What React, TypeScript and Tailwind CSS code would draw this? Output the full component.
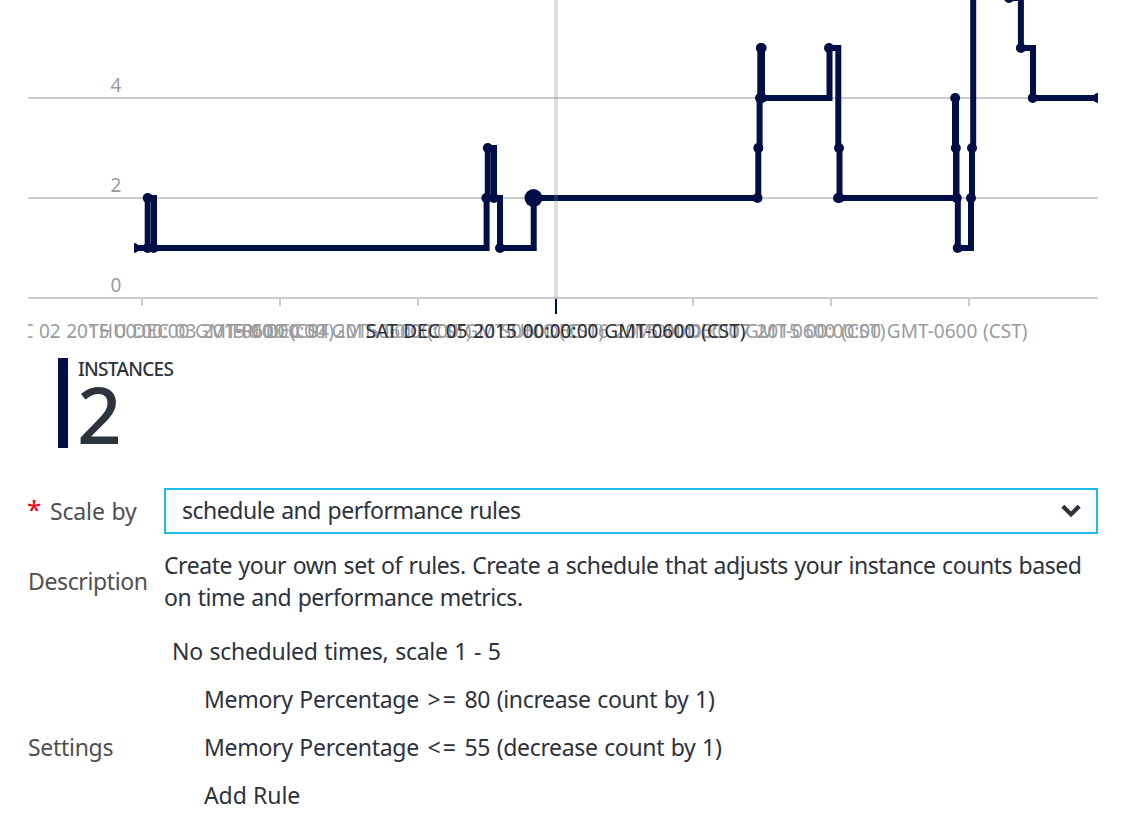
import React from "react";

const NAVY = "#000f46";

const ticks = [142, 280, 418, 693, 831, 969];

const axisLabels = [
  { x: 142, w: 384, text: "WED DEC 02 2015 00:00:00 GMT-0600 (CST)" },
  { x: 280, w: 383, text: "THU DEC 03 2015 00:00:00 GMT-0600 (CST)" },
  { x: 418, w: 372, text: "FRI DEC 04 2015 00:00:00 GMT-0600 (CST)" },
  { x: 693, w: 385, text: "SUN DEC 06 2015 00:00:00 GMT-0600 (CST)" },
  { x: 831, w: 393, text: "MON DEC 07 2015 00:00:00 GMT-0600 (CST)" },
];

const points: [number, number][] = [
  [134, 248], [147.7, 248], [147.7, 198], [153.7, 248],
  [487.8, 148], [486.3, 198], [493.8, 198], [500, 248],
  [760.8, 48], [761.6, 48], [760, 98], [762, 98], [758.3, 148], [757.5, 198],
  [829, 48], [839, 148], [838, 198], [839.5, 198],
  [955.2, 98], [955.8, 148], [956.7, 198], [957.7, 248],
  [971, 198], [972, 148],
  [1009, -2], [1020.9, 48], [1032.8, 98], [1098, 98],
];

const series =
  "M134 248H147.7V198H154V248H486.6V198H487.8V148H494V198H500V248H533.7V198H758.3V148H759.6V98H760.3V48H762V98H829.5V48H838.3V148H839.5V198H956V148H955V98H956V148H956.5V198H957.8V248H971V198H972V148H973.2V-10M1009 -2H1020.9V48H1033V98H1098";

function Chart() {
  return (
    <svg className="block h-[350px] w-[1070px] overflow-hidden" viewBox="28 0 1070 350" fontFamily="'Noto Sans', sans-serif">
      <defs>
        <clipPath id="plot">
          <rect x="134" y="0" width="964" height="300" />
        </clipPath>
      </defs>
      <g fill="#cccccc">
        <rect x="28" y="97" width="1070" height="2" />
        <rect x="28" y="197" width="1070" height="2" />
        <rect x="28" y="297" width="1070" height="2" />
        {ticks.map((x) => (
          <rect key={x} x={x - 1} y="299" width="2" height="7" />
        ))}
      </g>
      <g fill="#999c9f" fontSize="19">
        <text x="110.5" y="92">4</text>
        <text x="110.5" y="192">2</text>
        <text x="110.5" y="292">0</text>
      </g>
      <g clipPath="url(#plot)">
        <path d={series} fill="none" stroke={NAVY} strokeWidth="6" />
        {points.map(([x, y], i) => (
          <circle key={i} cx={x} cy={y} r="5" fill={NAVY} />
        ))}
        <circle cx="533.5" cy="198" r="9" fill={NAVY} />
      </g>
      <rect x="554" y="0" width="4" height="299" fill="#808080" fillOpacity="0.25" />
      <rect x="555" y="299" width="2" height="15" fill={NAVY} />
      <g fontSize="19" textAnchor="middle" wordSpacing="0.8">
        {axisLabels.map((l) => (
          <text key={l.x} x={l.x} y="338" textLength={l.w} fill="#999c9f">
            {l.text}
          </text>
        ))}
        <text x="555.5" y="338" textLength="380" fill="#2b3038">
          SAT DEC 05 2015 00:00:00 GMT-0600 (CST)
        </text>
      </g>
    </svg>
  );
}

function Rule({ operator, rest }: { operator: string; rest: string }) {
  return (
    <li className="pl-10">
      <span className="tracking-[-0.3px] [word-spacing:1px]">Memory Percentage </span>
      <span className="ml-0.5 tracking-[2px]">{operator}</span>
      <span className="tracking-[-0.35px] [word-spacing:1px]"> {rest}</span>
    </li>
  );
}

export default function App() {
  return (
    <main className="h-[816px] w-[1128px] overflow-hidden bg-white pl-7 pr-[30px] font-['Noto_Sans',sans-serif] text-[23px] leading-8 text-[#2d323b]">
      <Chart />

      <section className="ml-[30px] mt-2 flex h-[90px] gap-2.5">
        <div className="w-2.5 bg-[#000f46]" />
        <div className="font-medium">
          <div className="h-[22px] text-[19px] leading-[22px] tracking-[-0.7px]">INSTANCES</div>
          <div className="-ml-px h-[68px] text-[78px] leading-[69px]">2</div>
        </div>
      </section>

      <section className="mt-10 flex h-[46px] items-center">
        <label className="flex w-[136px] shrink-0 text-[#505050]">
          <span className="-ml-px w-[23px] text-[26px] font-medium leading-7 text-[#e81123]">*</span>
          <span className="tracking-[-0.15px] [word-spacing:1px]">Scale by</span>
        </label>
        <button className="flex h-[46px] flex-1 items-center justify-between border-2 border-[#1ebbee] pb-0.5 pl-4 pr-[15px] text-left tracking-[-0.48px] [word-spacing:1px]">
          <span>schedule and performance rules</span>
          <svg className="mt-0.5 h-4 w-5" viewBox="0 0 20 16">
            <path d="M1.8 3.2 10 11.4 18.2 3.2" fill="none" stroke="#2d323b" strokeWidth="4.2" />
          </svg>
        </button>
      </section>

      <section className="mt-[15px] flex items-center">
        <div className="w-[136px] shrink-0 tracking-[-0.37px] text-[#505050]">Description</div>
        <p className="whitespace-nowrap tracking-[-0.45px] [word-spacing:1px]">
          Create your own set of rules. Create a schedule that adjusts your instance counts based
          <br />
          on time and performance metrics.
        </p>
      </section>

      <section className="mt-[14px] flex">
        <div className="flex h-[240px] w-[136px] shrink-0 items-center tracking-[-0.3px] text-[#505050]">Settings</div>
        <ul className="leading-[48px]">
          <li className="pl-2 tracking-[-0.3px] [word-spacing:1.1px]">No scheduled times, scale 1 - 5</li>
          <Rule operator=">=" rest="80 (increase count by 1)" />
          <Rule operator="<=" rest="55 (decrease count by 1)" />
          <li className="pl-10 tracking-[-0.1px] [word-spacing:0.5px]">Add Rule</li>
        </ul>
      </section>
    </main>
  );
}
